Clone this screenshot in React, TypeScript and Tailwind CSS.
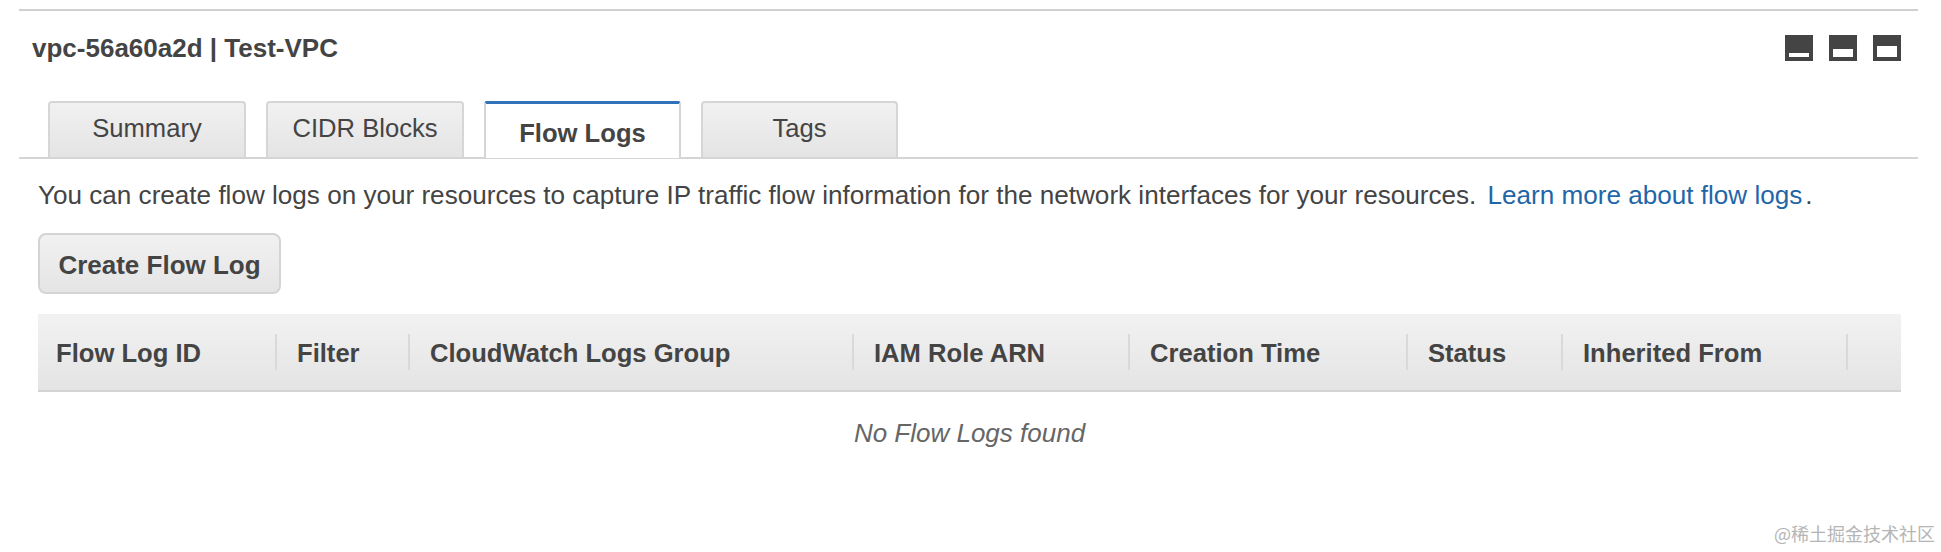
const font = "font-['Liberation_Sans',Arial,sans-serif]";

const tabs = [
  { label: "Summary", width: "w-[198px]" },
  { label: "CIDR Blocks", width: "w-[198px]" },
  { label: "Flow Logs", width: "w-[197px]", active: true },
  { label: "Tags", width: "w-[197px]" },
];

const columns = [
  { label: "Flow Log ID", width: "w-[221px]" },
  { label: "Filter", width: "w-[133px]" },
  { label: "CloudWatch Logs Group", width: "w-[444px]" },
  { label: "IAM Role ARN", width: "w-[276px]" },
  { label: "Creation Time", width: "w-[278px]" },
  { label: "Status", width: "w-[155px]" },
  { label: "Inherited From", width: "w-[285px]" },
];

function PanelIcon({ barTop, barHeight }: { barTop: number; barHeight: number }) {
  return (
    <svg width="28" height="26" viewBox="0 0 28 26" className="block">
      <rect width="28" height="26" fill="#444" />
      <rect x="4" y={barTop} width="20" height={barHeight} fill="#fff" />
    </svg>
  );
}

function Tab({ label, width, active }: { label: string; width: string; active?: boolean }) {
  if (active) {
    return (
      <div className={`${width} -mb-px flex h-[57px] items-center justify-center rounded-t-[3px] border-x-2 border-t-[3px] border-x-[#d5d5d5] border-t-[#2f72b9] bg-white pt-1 text-[25.6px] font-bold text-[#444]`}>
        {label}
      </div>
    );
  }
  return (
    <div className={`${width} flex h-[56px] items-center justify-center rounded-t-[4px] border-x-2 border-t-2 border-[#d6d6d6] bg-gradient-to-b from-[#f1f1f1] to-[#e4e4e4] pb-1 text-[25.6px] text-[#444]`}>
      {label}
    </div>
  );
}

export default function App() {
  return (
    <div className={`${font} h-[552px] w-[1941px] overflow-hidden bg-white pl-[19px] pr-[23px] pt-[9px] text-[#444]`}>
      <div className="border-t-2 border-[#d0d0d0]">
        <div className="flex h-[60px] items-start justify-between pl-[13px] pr-[17px] pt-[23px]">
          <h2 className="text-[26px] leading-[28px] font-bold">vpc-56a60a2d | Test-VPC</h2>
          <div className="flex gap-[16px] pt-[1px]">
            <PanelIcon barTop={18} barHeight={4} />
            <PanelIcon barTop={14} barHeight={8} />
            <PanelIcon barTop={11} barHeight={11} />
          </div>
        </div>

        <div className="mt-[30px] flex gap-[20px] border-b-2 border-[#d5d5d5] pl-[29px]">
          {tabs.map((tab) => (
            <Tab key={tab.label} {...tab} />
          ))}
        </div>

        <div className="pl-[19px] pr-[17px]">
          <p className="mt-[22px] text-[26.1px] leading-[28px] whitespace-nowrap">
            You can create flow logs on your resources to capture IP traffic flow information for the network interfaces for your resources.{" "}
            <a className="ml-[4px] text-[#1f66a8]">Learn more about flow logs</a>
            <span className="ml-[3px]">.</span>
          </p>

          <button className="mt-[24px] block h-[61px] w-[243px] rounded-[8px] border-2 border-[#d4d4d4] bg-gradient-to-b from-[#f1f1f1] to-[#e5e5e5] pt-[3px] text-[26px] font-bold text-[#444]">
            Create Flow Log
          </button>

          <div className="mt-[20px] flex h-[78px] items-center border-b-2 border-[#d4d4d4] bg-gradient-to-b from-[#f2f2f2] to-[#e4e4e4]">
            <div className="flex pl-[18px]">
              {columns.map((col, i) => (
                <div key={col.label} className={`${col.width} flex h-[36px] items-center ${i > 0 ? "pl-[20px]" : ""} border-r-2 border-[#d9d9d9] pt-[2px] text-[25.6px] font-bold whitespace-nowrap`}>
                  {col.label}
                </div>
              ))}
            </div>
          </div>

          <p className="mt-[27px] text-center text-[26px] leading-[28px] text-[#666] italic">No Flow Logs found</p>
        </div>
      </div>

      <div className="mt-[76px] -mr-[17px] text-right font-['Noto_Sans_CJK_SC',sans-serif] text-[18px] leading-[20px] text-[#b5b5b5]">
        @稀土掘金技术社区
      </div>
    </div>
  );
}
